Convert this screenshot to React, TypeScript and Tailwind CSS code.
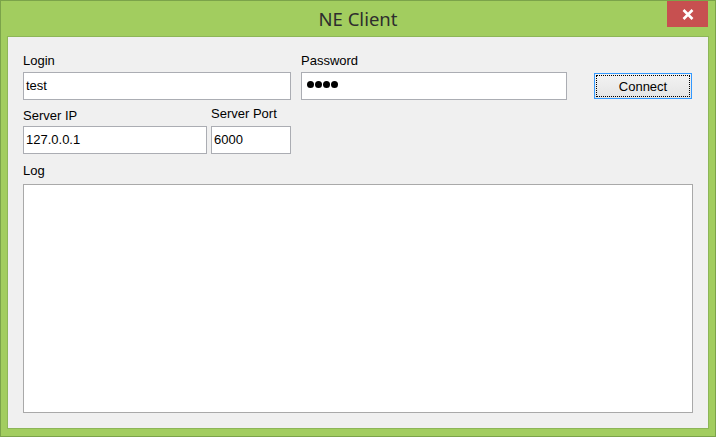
import React from 'react'

const sans = { fontFamily: '"Liberation Sans", Arial, sans-serif' }

function Field({ value, className }: { value: string; className: string }) {
  return (
    <div
      className={`h-[28px] border border-[#abadb3] bg-white pl-[2px] pt-[5px] text-[13px] leading-[15px] text-black ${className}`}
    >
      {value}
    </div>
  )
}

function Label({ text, className = '' }: { text: string; className?: string }) {
  return <div className={`h-[15px] text-[13px] leading-[15px] text-black ${className}`}>{text}</div>
}

export default function App() {
  return (
    <div className="w-[716px] h-[437px] border border-[#7ba34a] bg-[#a2cd5f] flex flex-col" style={sans}>
      {/* title bar */}
      <div className="relative h-[35px] flex items-center justify-center shrink-0">
        <span
          className="text-[18.5px] leading-none text-[#2e2e2e] mt-[2px]"
          style={{ fontFamily: '"Noto Sans", "Open Sans", sans-serif' }}
        >
          NE Client
        </span>
        <div className="absolute right-[7px] top-0 w-[41px] h-[26px] bg-[#c75050] flex items-center justify-center">
          <svg width="12" height="11" viewBox="0 0 12 11">
            <path d="M1.5 1 L10.5 10 M10.5 1 L1.5 10" stroke="#fff" strokeWidth="2.6" strokeLinecap="butt" />
          </svg>
        </div>
      </div>

      {/* client area */}
      <div className="mx-[6px] h-[393px] border border-[#8db658] bg-[#f0f0f0] pl-[15px] pt-[16px] shrink-0">
        {/* row 1 */}
        <div className="flex items-start">
          <div className="flex flex-col">
            <Label text="Login" />
            <Field value="test" className="w-[268px] mt-[4px]" />
          </div>
          <div className="flex flex-col ml-[10px]">
            <Label text="Password" />
            <div className="w-[266px] h-[28px] mt-[4px] border border-[#abadb3] bg-white flex items-center gap-[1px] pl-[5px] pb-[3px]">
              <span className="w-[7px] h-[7px] rounded-full bg-black" />
              <span className="w-[7px] h-[7px] rounded-full bg-black" />
              <span className="w-[7px] h-[7px] rounded-full bg-black" />
              <span className="w-[7px] h-[7px] rounded-full bg-black" />
            </div>
          </div>
          <button
            className="relative ml-[27px] mt-[20px] w-[98px] h-[26px] border border-[#3399ff] bg-gradient-to-b from-[#f3f3f3] to-[#e4e4e4] text-[13px] leading-[15px] text-black pt-[1px]"
            style={sans}
          >
            <span className="absolute inset-[1px] border border-dotted border-black" />
            Connect
          </button>
        </div>

        {/* row 2 */}
        <div className="flex items-start">
          <div className="flex flex-col mt-[8px]">
            <Label text="Server IP" />
            <Field value="127.0.0.1" className="w-[184px] mt-[3px]" />
          </div>
          <div className="flex flex-col ml-[4px] mt-[6px]">
            <Label text="Server Port" />
            <Field value="6000" className="w-[80px] mt-[5px]" />
          </div>
        </div>

        {/* log */}
        <Label text="Log" className="mt-[9px]" />
        <div className="mt-[6px] w-[670px] h-[229px] border border-[#a9a9a9] bg-white" />
      </div>
    </div>
  )
}
